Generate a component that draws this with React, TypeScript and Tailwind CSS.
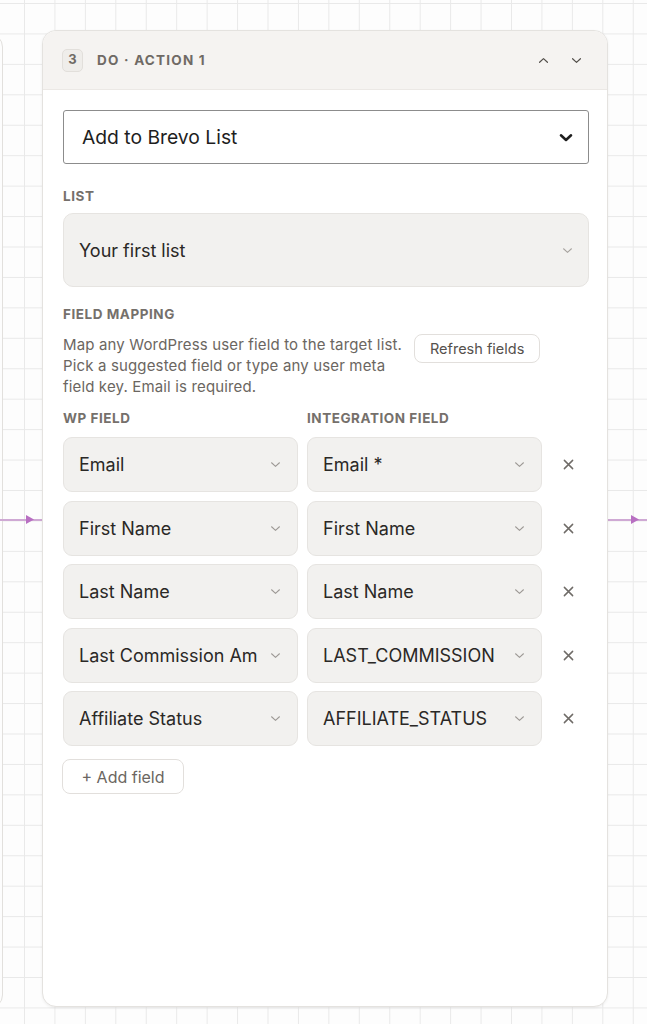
import type { FC } from "react";

const font = "font-['Inter','Liberation_Sans',sans-serif]";

const Chevron: FC<{ dir?: "up" | "down"; className?: string; strokeWidth?: number }> = ({
  dir = "down",
  className,
  strokeWidth = 1.4
}) => (
  <svg viewBox="0 0 12 8" className={className} fill="none" stroke="currentColor" strokeWidth={strokeWidth} strokeLinecap="round" strokeLinejoin="round">
    {dir === "down" ? <path d="M1.5 2 L6 6.2 L10.5 2" /> : <path d="M1.5 6 L6 1.8 L10.5 6" />}
  </svg>
);

const Close = () => (
  <svg viewBox="0 0 12 12" className="h-[11px] w-[11px] text-[#6f6b67]" fill="none" stroke="currentColor" strokeWidth={1.6} strokeLinecap="round">
    <path d="M1.5 1.5 L10.5 10.5 M10.5 1.5 L1.5 10.5" />
  </svg>
);

const SoftSelect: FC<{ value: string }> = ({ value }) => (
  <div className="flex h-[55px] items-center justify-between rounded-[9px] border border-[#e6e4e1] bg-[#f2f1ef] pl-[15px] pr-[16px]">
    <span className="truncate text-[18px] text-[#2a2826]">{value}</span>
    <Chevron className="h-[7px] w-[11px] shrink-0 text-[#9c9894]" strokeWidth={1.2} />
  </div>
);

const rows = [
  ["Email", "Email *"],
  ["First Name", "First Name"],
  ["Last Name", "Last Name"],
  ["Last Commission Am", "LAST_COMMISSION"],
  ["Affiliate Status", "AFFILIATE_STATUS"]
];

const Label: FC<{ children: string }> = ({ children }) => (
  <div className="h-[18px] text-[13.5px] font-bold leading-[18px] tracking-[0.04em] text-[#75706b]">{children}</div>
);

const Connector: FC<{ className: string }> = ({ className }) => (
  <div className={`absolute top-[518px] h-[3px] ${className}`}>
    <div className="absolute left-0 right-0 top-[1px] h-[1.5px] bg-[#cfa9d4]" />
  </div>
);

const Arrow: FC<{ left: number }> = ({ left }) => (
  <svg className="absolute top-[515px]" style={{ left }} width="8" height="9" viewBox="0 0 8 9">
    <path d="M0 0 L8 4.5 L0 9 Z" fill="#b86fc2" />
  </svg>
);

const App: FC = () => {
  return (
    <div
      className={`relative h-[1024px] w-[647px] overflow-hidden bg-[#fdfdfd] ${font} bg-[linear-gradient(to_right,#e9e9e9_1px,transparent_1px),linear-gradient(to_bottom,#e9e9e9_1px,transparent_1px)] bg-[length:30.45px_30.45px] bg-[position:24px_3px]`}
    >
      {/* neighbour node, cut off at the left edge */}
      <div className="absolute left-[-300px] top-[33px] h-[976px] w-[303px] rounded-[14px] border border-[#e2e0dd] bg-[#fdfdfd]" />

      <Connector className="left-0 w-[42px]" />
      <Arrow left={26} />
      <Connector className="left-[607px] w-[40px]" />
      <Arrow left={631} />

      <div className="relative ml-[42px] mt-[30px] flex h-[977px] w-[566px] flex-col overflow-hidden rounded-[14px] border border-[#e4e2df] bg-white shadow-[0_1px_3px_rgba(0,0,0,0.06)]">
        <div className="flex h-[59px] shrink-0 items-center border-b border-[#ebe8e5] bg-[#f5f3f1] pl-[19px] pr-[25px]">
          <div className="flex h-[23px] w-[21px] items-center justify-center rounded-[5px] border border-[#e2dfdb] bg-[#efedea] text-[13px] font-bold text-[#6f6a65]">
            3
          </div>
          <div className="ml-[14px] text-[13.5px] font-bold tracking-[0.09em] text-[#6f6a65]">DO · ACTION 1</div>
          <div className="ml-auto flex items-center gap-[22px] text-[#55514d]">
            <Chevron dir="up" className="h-[7px] w-[11px]" />
            <Chevron className="h-[7px] w-[11px]" />
          </div>
        </div>

        <div className="flex flex-col pl-[20px] pr-[18px]">
          <div className="mt-[20px] flex h-[54px] items-center justify-between rounded-[3px] border border-[#8c8c8c] pl-[18px] pr-[15px]">
            <span className="text-[19.3px] text-[#1e1e1e]">Add to Brevo List</span>
            <Chevron className="h-[9px] w-[14px] text-[#1e1e1e]" strokeWidth={2.2} />
          </div>

          <div className="mt-[23px]">
            <Label>LIST</Label>
          </div>
          <div className="mt-[8px] flex h-[74px] items-center justify-between rounded-[10px] border border-[#e6e4e1] bg-[#f2f1ef] pl-[15px] pr-[15px]">
            <span className="text-[18px] text-[#2a2826]">Your first list</span>
            <Chevron className="h-[7px] w-[11px] text-[#a7a39f]" strokeWidth={1.2} />
          </div>

          <div className="mt-[18px]">
            <Label>FIELD MAPPING</Label>
          </div>
          <div className="mt-[11px] flex items-start gap-[9px]">
            <p className="w-[342px] text-[15px] leading-[21px] tracking-[0.01em] text-[#6b6661]">
              Map any WordPress user field to the target list. Pick a suggested field or type any user meta field key. Email is required.
            </p>
            <button className="h-[29px] rounded-[8px] border border-[#e2dfdc] bg-white px-[15px] text-[14.5px] text-[#55514d]">
              Refresh fields
            </button>
          </div>

          <div className="mt-[12px] grid grid-cols-[1fr_1fr_38px] gap-x-[9px]">
            <Label>WP FIELD</Label>
            <Label>INTEGRATION FIELD</Label>
          </div>

          <div className="mt-[10px] flex flex-col gap-[8.5px]">
            {rows.map(([wp, integration]) => (
              <div key={wp} className="grid grid-cols-[1fr_1fr_38px] items-center gap-x-[9px]">
                <SoftSelect value={wp} />
                <SoftSelect value={integration} />
                <div className="flex justify-center pr-[4px]">
                  <Close />
                </div>
              </div>
            ))}
          </div>

          <div className="-ml-px mt-[13px]">
            <button className="h-[35px] rounded-[8px] border border-[#e2dfdc] bg-white px-[18.5px] text-[16px] text-[#6b6661]">
              + Add field
            </button>
          </div>
        </div>
      </div>
    </div>
  );
};

export default App;
